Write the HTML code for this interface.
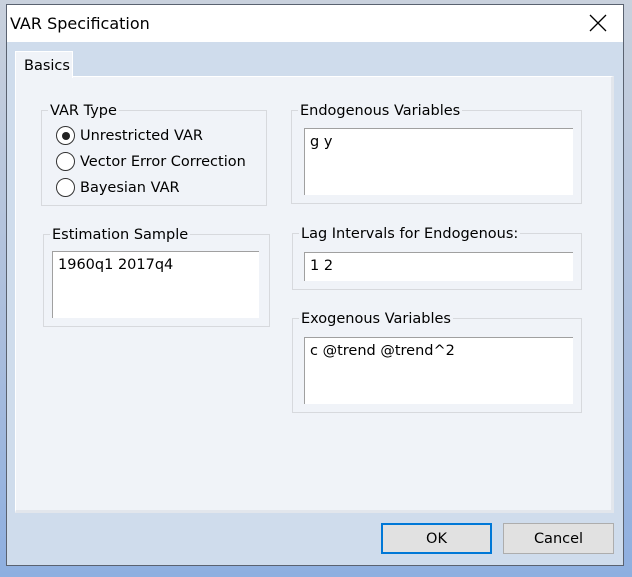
<!DOCTYPE html>
<html><head><style>
*{margin:0;padding:0;box-sizing:border-box}
body{width:632px;height:577px;overflow:hidden;background:linear-gradient(180deg,#c9d1dd 0%,#a9bddd 60%,#8eafe0 100%);font-family:"DejaVu Sans","Liberation Sans",sans-serif;font-size:14.5px;color:#000;position:relative}
.a{position:absolute}
.win{left:6px;top:4px;width:618px;height:562px;background:#cfdcec;border:1px solid #5a6270}
.title{left:7px;top:5px;width:616px;height:37px;background:#fff}
.panel{left:15px;top:76px;width:599px;height:437px;background:#f0f3f8;border:1px solid #fff;border-right:3px solid #e2e6ec;border-bottom:3px solid #e2e6ec}
.tab{left:15px;top:51px;width:58px;height:27px;background:#f0f3f8;border:1px solid #fff;border-bottom:none;padding:6px 0 0 8px}
.grp{border:1px solid #d7d9dd}
.lbl{background:#f0f3f8;padding:0 2px;top:-9px;left:6px;position:absolute;white-space:nowrap;line-height:18px}
.edit{background:#fff;border-top:1px solid #a0a0a0;border-left:1px solid #a0a0a0;padding:5px 0 0 5px}
.rad{width:19px;height:19px;border:1px solid #333;border-radius:50%;background:#fff}
.btn{background:#e1e1e1;border:1px solid #adadad;text-align:center;line-height:28px}
</style></head><body>
<div class="a win"></div>
<div class="a title"></div>
<div class="a" style="left:10px;top:14px;font-size:16px">VAR Specification</div>
<svg class="a" style="left:589px;top:14px" width="18" height="18"><path d="M1 1L17 17M17 1L1 17" stroke="#000" stroke-width="1.3"/></svg>
<div class="a panel"></div>
<div class="a tab">Basics</div>

<div class="a grp" style="left:41px;top:110px;width:226px;height:96px"><span class="lbl">VAR Type</span></div>
<div class="a rad" style="left:56px;top:126px"></div><div class="a" style="left:62px;top:132px;width:8px;height:8px;border-radius:50%;background:#222"></div>
<div class="a" style="left:80px;top:128px">Unrestricted VAR</div>
<div class="a rad" style="left:56px;top:152px"></div>
<div class="a" style="left:80px;top:154px">Vector Error Correction</div>
<div class="a rad" style="left:56px;top:178px"></div>
<div class="a" style="left:80px;top:180px">Bayesian VAR</div>

<div class="a grp" style="left:43px;top:234px;width:227px;height:93px"><span class="lbl">Estimation Sample</span></div>
<div class="a edit" style="left:52px;top:251px;width:207px;height:67px">1960q1 2017q4</div>

<div class="a grp" style="left:291px;top:110px;width:291px;height:94px"><span class="lbl">Endogenous Variables</span></div>
<div class="a edit" style="left:304px;top:128px;width:269px;height:67px">g y</div>

<div class="a grp" style="left:292px;top:233px;width:290px;height:57px"><span class="lbl">Lag Intervals for Endogenous:</span></div>
<div class="a edit" style="left:304px;top:252px;width:269px;height:29px">1 2</div>

<div class="a grp" style="left:292px;top:318px;width:290px;height:95px"><span class="lbl">Exogenous Variables</span></div>
<div class="a edit" style="left:304px;top:337px;width:269px;height:67px">c @trend @trend^2</div>

<div class="a btn" style="left:381px;top:523px;width:111px;height:31px;border:2px solid #0078d7">OK</div>
<div class="a btn" style="left:503px;top:523px;width:111px;height:31px;line-height:30px">Cancel</div>
</body></html>
